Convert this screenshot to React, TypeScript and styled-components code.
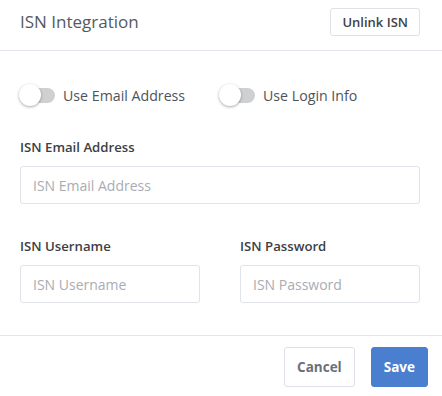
import React from "react";
import styled, { createGlobalStyle } from "styled-components";

const Global = createGlobalStyle`
  html, body { margin: 0; padding: 0; background: #fff; }
  body { font-family: "Open Sans", "Noto Sans", sans-serif; -webkit-font-smoothing: antialiased; }
  * { box-sizing: border-box; }
`;

const Modal = styled.div`
  width: 442px;
  height: 396px;
  background: #fff;
  display: flex;
  flex-direction: column;
`;

const Header = styled.div`
  height: 51px;
  display: flex;
  align-items: flex-start;
  justify-content: space-between;
  padding: 8px 22px 0 20px;
  border-bottom: 1px solid #e3e4ec;
`;

const Title = styled.h2`
  margin: 0;
  margin-top: 2px;
  font-size: 17px;
  font-weight: 400;
  color: #555a60;
  line-height: 24px;
`;

const SmallButton = styled.button`
  height: 28px;
  padding: 0 11px;
  font-family: inherit;
  font-size: 13px;
  font-weight: 600;
  color: #3f4349;
  background: #fff;
  border: 1px solid #dfe1e6;
  border-radius: 3px;
`;

const Body = styled.div`
  flex: 1;
  padding: 33px 22px 0 20px;
  display: flex;
  flex-direction: column;
  border-bottom: 1px solid #e3e4ec;
`;

const ToggleRow = styled.div`
  display: flex;
  height: 23px;
  align-items: center;
`;

const ToggleItem = styled.label`
  display: flex;
  align-items: center;
  width: 200px;
  gap: 8px;
  font-size: 14.2px;
  color: #4e535a;
`;

const Track = styled.span`
  position: relative;
  width: 35px;
  height: 15px;
  border-radius: 8px;
  background: #cfd0d2;
  flex: none;
`;

const Knob = styled.span`
  position: absolute;
  left: -1px;
  top: -4px;
  width: 22px;
  height: 22px;
  border-radius: 50%;
  background: #fff;
  box-shadow: 0 1px 3px rgba(0, 0, 0, 0.35);
`;

const Field = styled.div<{ $top: number }>`
  display: flex;
  flex-direction: column;
  margin-top: ${(p) => p.$top}px;
  min-width: 0;
`;

const Label = styled.div`
  font-size: 13.2px;
  font-weight: 600;
  color: #3c4046;
  line-height: 18px;
  margin-bottom: 10px;
`;

const Input = styled.input`
  height: 38px;
  width: 100%;
  border: 1px solid #e1e3ea;
  border-radius: 3px;
  padding: 0 12px;
  font-family: inherit;
  font-size: 14px;
  color: #333;
  outline: none;
  &::placeholder { color: #a9acb3; }
`;

const Grid = styled.div`
  display: grid;
  grid-template-columns: 180px 180px;
  column-gap: 40px;
`;

const Footer = styled.div`
  height: 60px;
  display: flex;
  justify-content: flex-end;
  align-items: flex-start;
  padding: 11px 14px 0 0;
  gap: 16px;
`;

const Button = styled.button<{ $primary?: boolean }>`
  height: 40px;
  padding: 0 12px;
  font-family: inherit;
  font-size: 13.5px;
  font-weight: 700;
  border-radius: 3px;
  border: 1px solid ${(p) => (p.$primary ? "#4a7fcf" : "#dfe1e6")};
  background: ${(p) => (p.$primary ? "#4a7fcf" : "#fff")};
  color: ${(p) => (p.$primary ? "#fff" : "#6b7078")};
`;

function Toggle({ label }: { label: string }) {
  return (
    <ToggleItem>
      <Track>
        <Knob />
      </Track>
      {label}
    </ToggleItem>
  );
}

export default function App() {
  return (
    <>
      <Global />
      <Modal>
        <Header>
          <Title>ISN Integration</Title>
          <SmallButton>Unlink ISN</SmallButton>
        </Header>
        <Body>
          <ToggleRow>
            <Toggle label="Use Email Address" />
            <Toggle label="Use Login Info" />
          </ToggleRow>
          <Field $top={31}>
            <Label>ISN Email Address</Label>
            <Input placeholder="ISN Email Address" />
          </Field>
          <Grid>
            <Field $top={33}>
              <Label>ISN Username</Label>
              <Input placeholder="ISN Username" />
            </Field>
            <Field $top={33}>
              <Label>ISN Password</Label>
              <Input placeholder="ISN Password" />
            </Field>
          </Grid>
        </Body>
        <Footer>
          <Button>Cancel</Button>
          <Button $primary>Save</Button>
        </Footer>
      </Modal>
    </>
  );
}
